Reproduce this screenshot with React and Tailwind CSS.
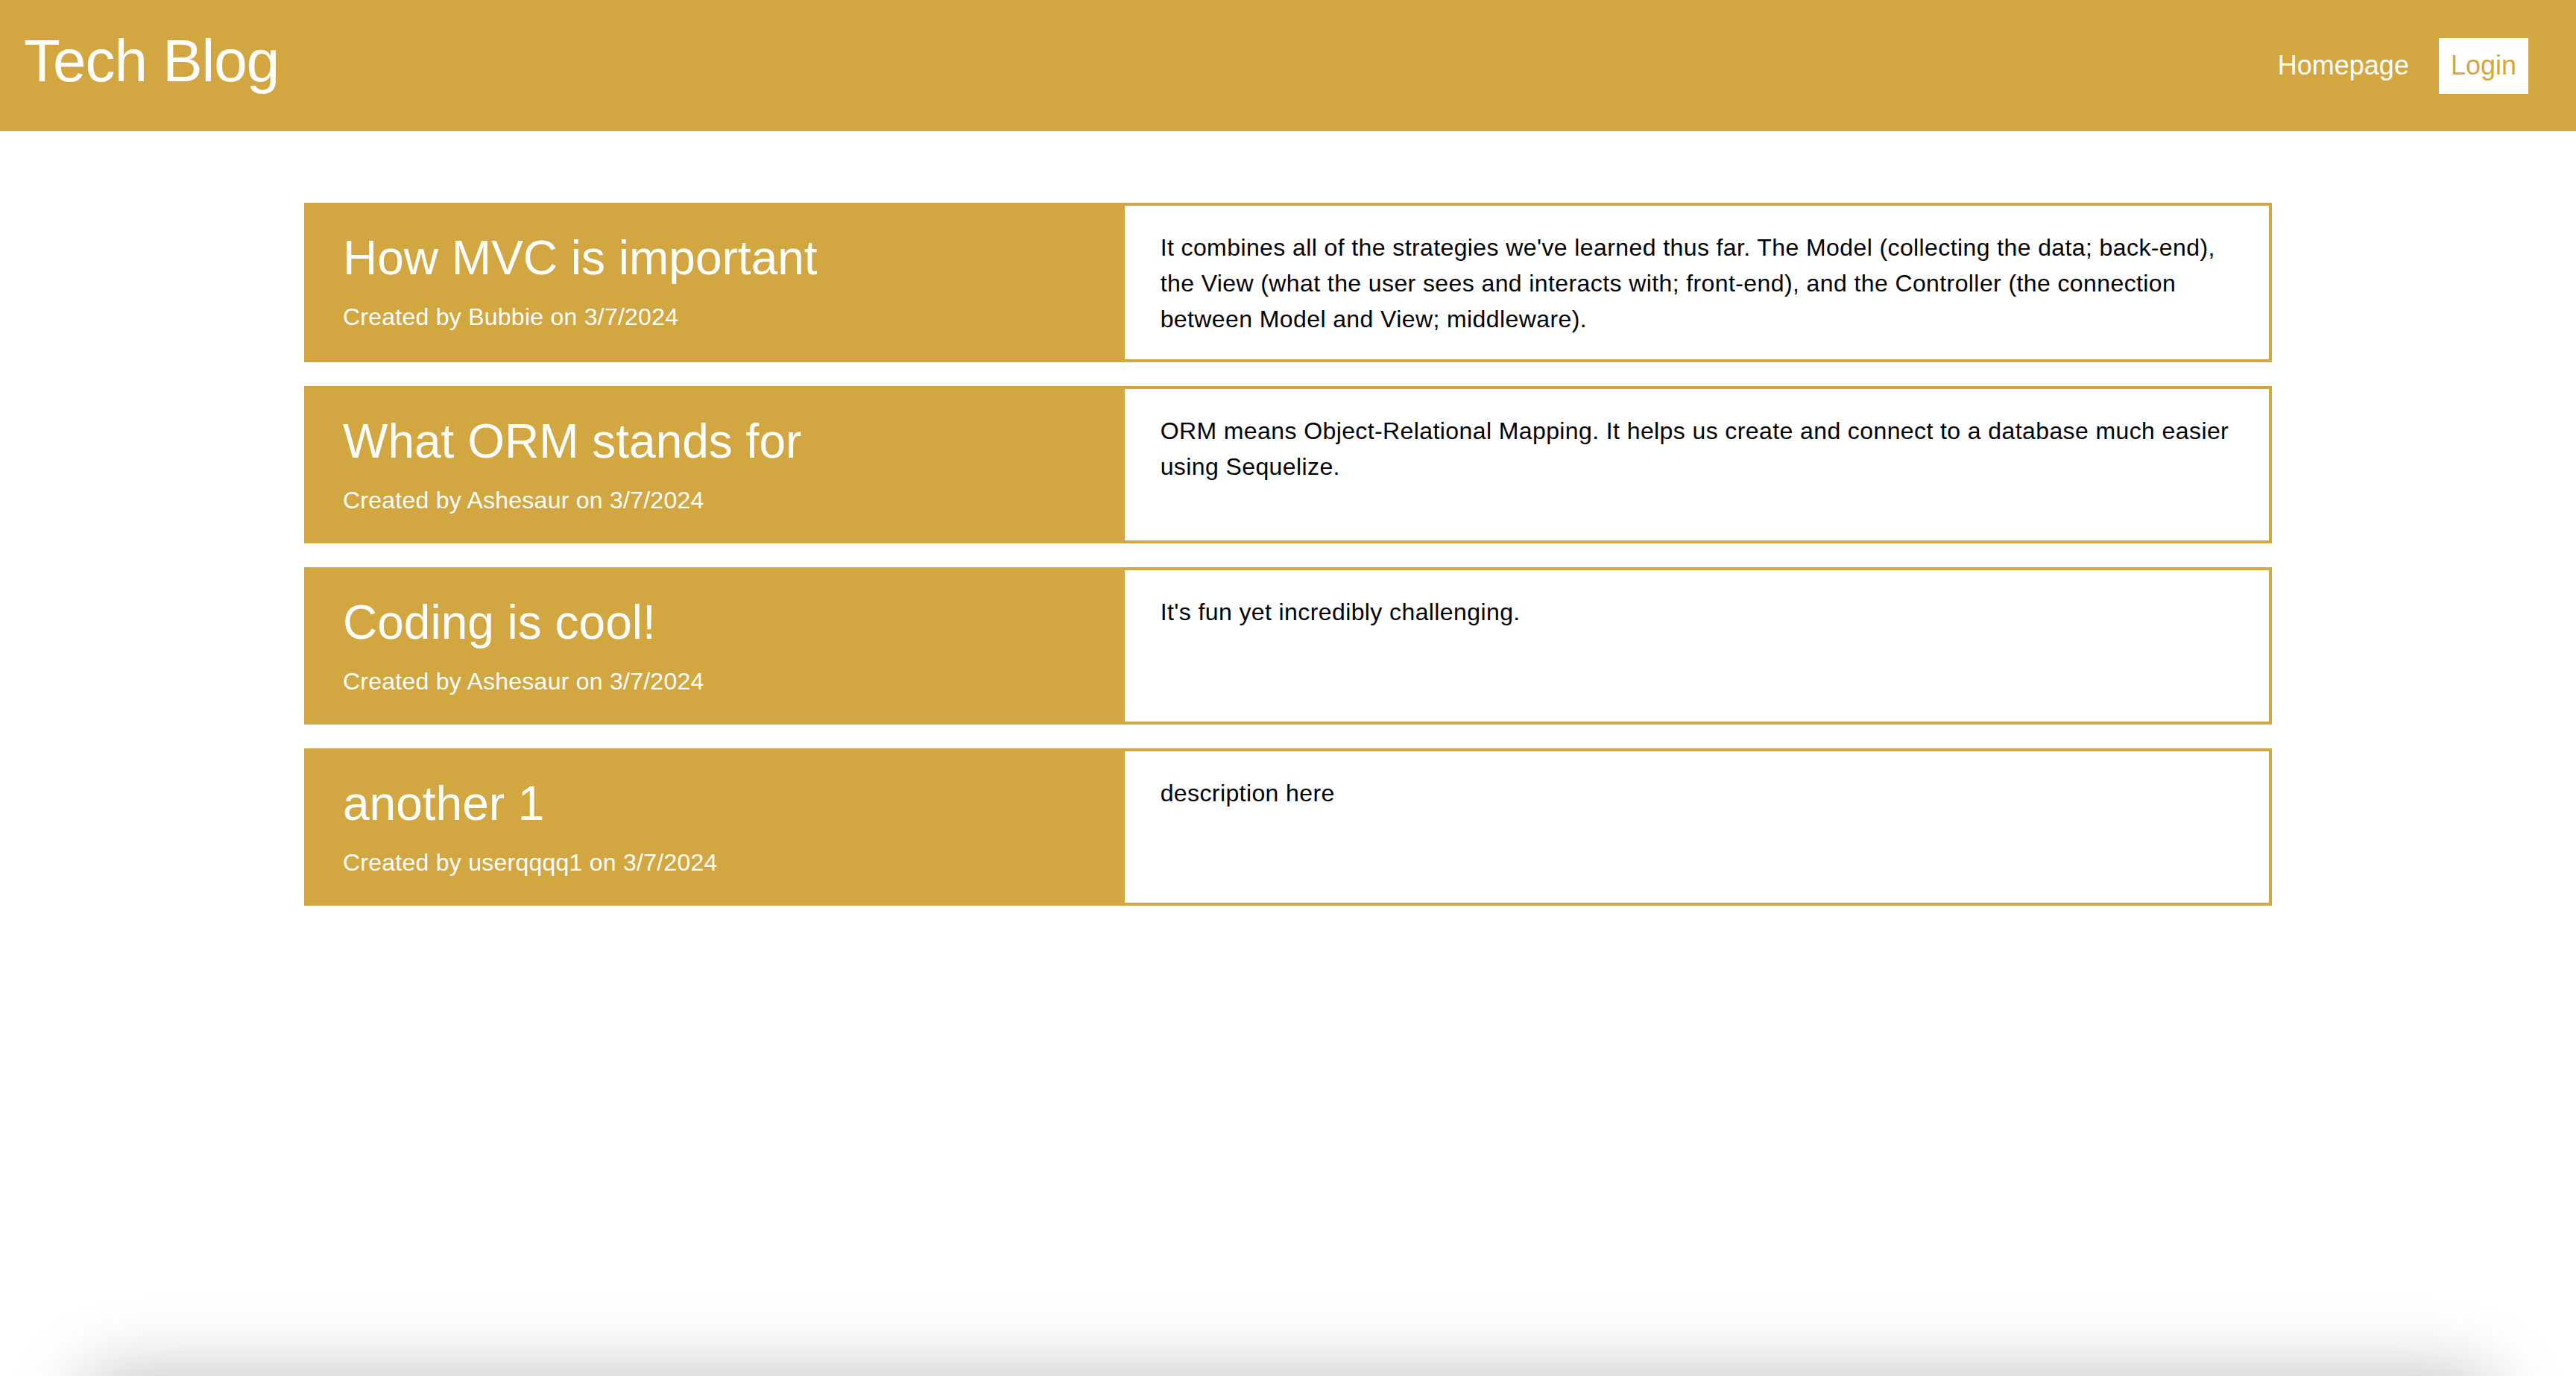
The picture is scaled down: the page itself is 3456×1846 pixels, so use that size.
import React from 'react'

const posts = [
  {
    title: 'How MVC is important',
    author: 'Bubbie',
    date: '3/7/2024',
    body: "It combines all of the strategies we've learned thus far. The Model (collecting the data; back-end), the View (what the user sees and interacts with; front-end), and the Controller (the connection between Model and View; middleware).",
  },
  {
    title: 'What ORM stands for',
    author: 'Ashesaur',
    date: '3/7/2024',
    body: 'ORM means Object-Relational Mapping. It helps us create and connect to a database much easier using Sequelize.',
  },
  {
    title: 'Coding is cool!',
    author: 'Ashesaur',
    date: '3/7/2024',
    body: "It's fun yet incredibly challenging.",
  },
  {
    title: 'another 1',
    author: 'userqqqq1',
    date: '3/7/2024',
    body: 'description here',
  },
]

const PostCard = ({ post }) => {
  return (
    <div className="flex border-[4px] border-[#d2a741]">
      <div className="w-5/12 bg-[#d2a741] px-[48px] pt-[32px] pb-[30px] text-white">
        <h2 className="text-[64px] leading-[77px] mb-[16px]">{post.title}</h2>
        <p className="text-[32px] leading-[48px] tracking-[0.25px]">
          Created by {post.author} on {post.date}
        </p>
      </div>
      <div className="flex-1 bg-white px-[48px] pt-[32px] pb-[30px]">
        <p className="text-[32px] leading-[48px] tracking-[0.4px] text-black">{post.body}</p>
      </div>
    </div>
  )
}

const App = () => {
  return (
    <div className="h-screen overflow-hidden flex flex-col bg-white font-['Liberation_Sans',Arial,sans-serif]">
      <header className="h-[176px] shrink-0 bg-[#d2a741] flex items-center justify-between pl-[32px] pr-[64px]">
        <h1 className="text-[80px] leading-[96px] tracking-[-1px] text-white pb-[13px]">Tech Blog</h1>
        <nav className="flex items-center gap-[40px] text-[36px]">
          <a href="#" className="text-white">Homepage</a>
          <a href="#" className="h-[75px] px-[16px] flex items-center bg-white text-[#d2a741]">Login</a>
        </nav>
      </header>

      <main className="flex-1">
        <div className="w-[2640px] mx-auto mt-[96px] flex flex-col gap-[32px]">
          {posts.map((post, index) => (
            <PostCard key={index} post={post} />
          ))}
        </div>
      </main>

      {/* footer just under the fold, only its shadow shows */}
      <footer className="h-[200px] -mb-[200px] shrink-0 mx-[110px] rounded-[40px] bg-white shadow-[0_0_100px_0_rgba(0,0,0,0.26)]"></footer>
    </div>
  )
}

export default App
